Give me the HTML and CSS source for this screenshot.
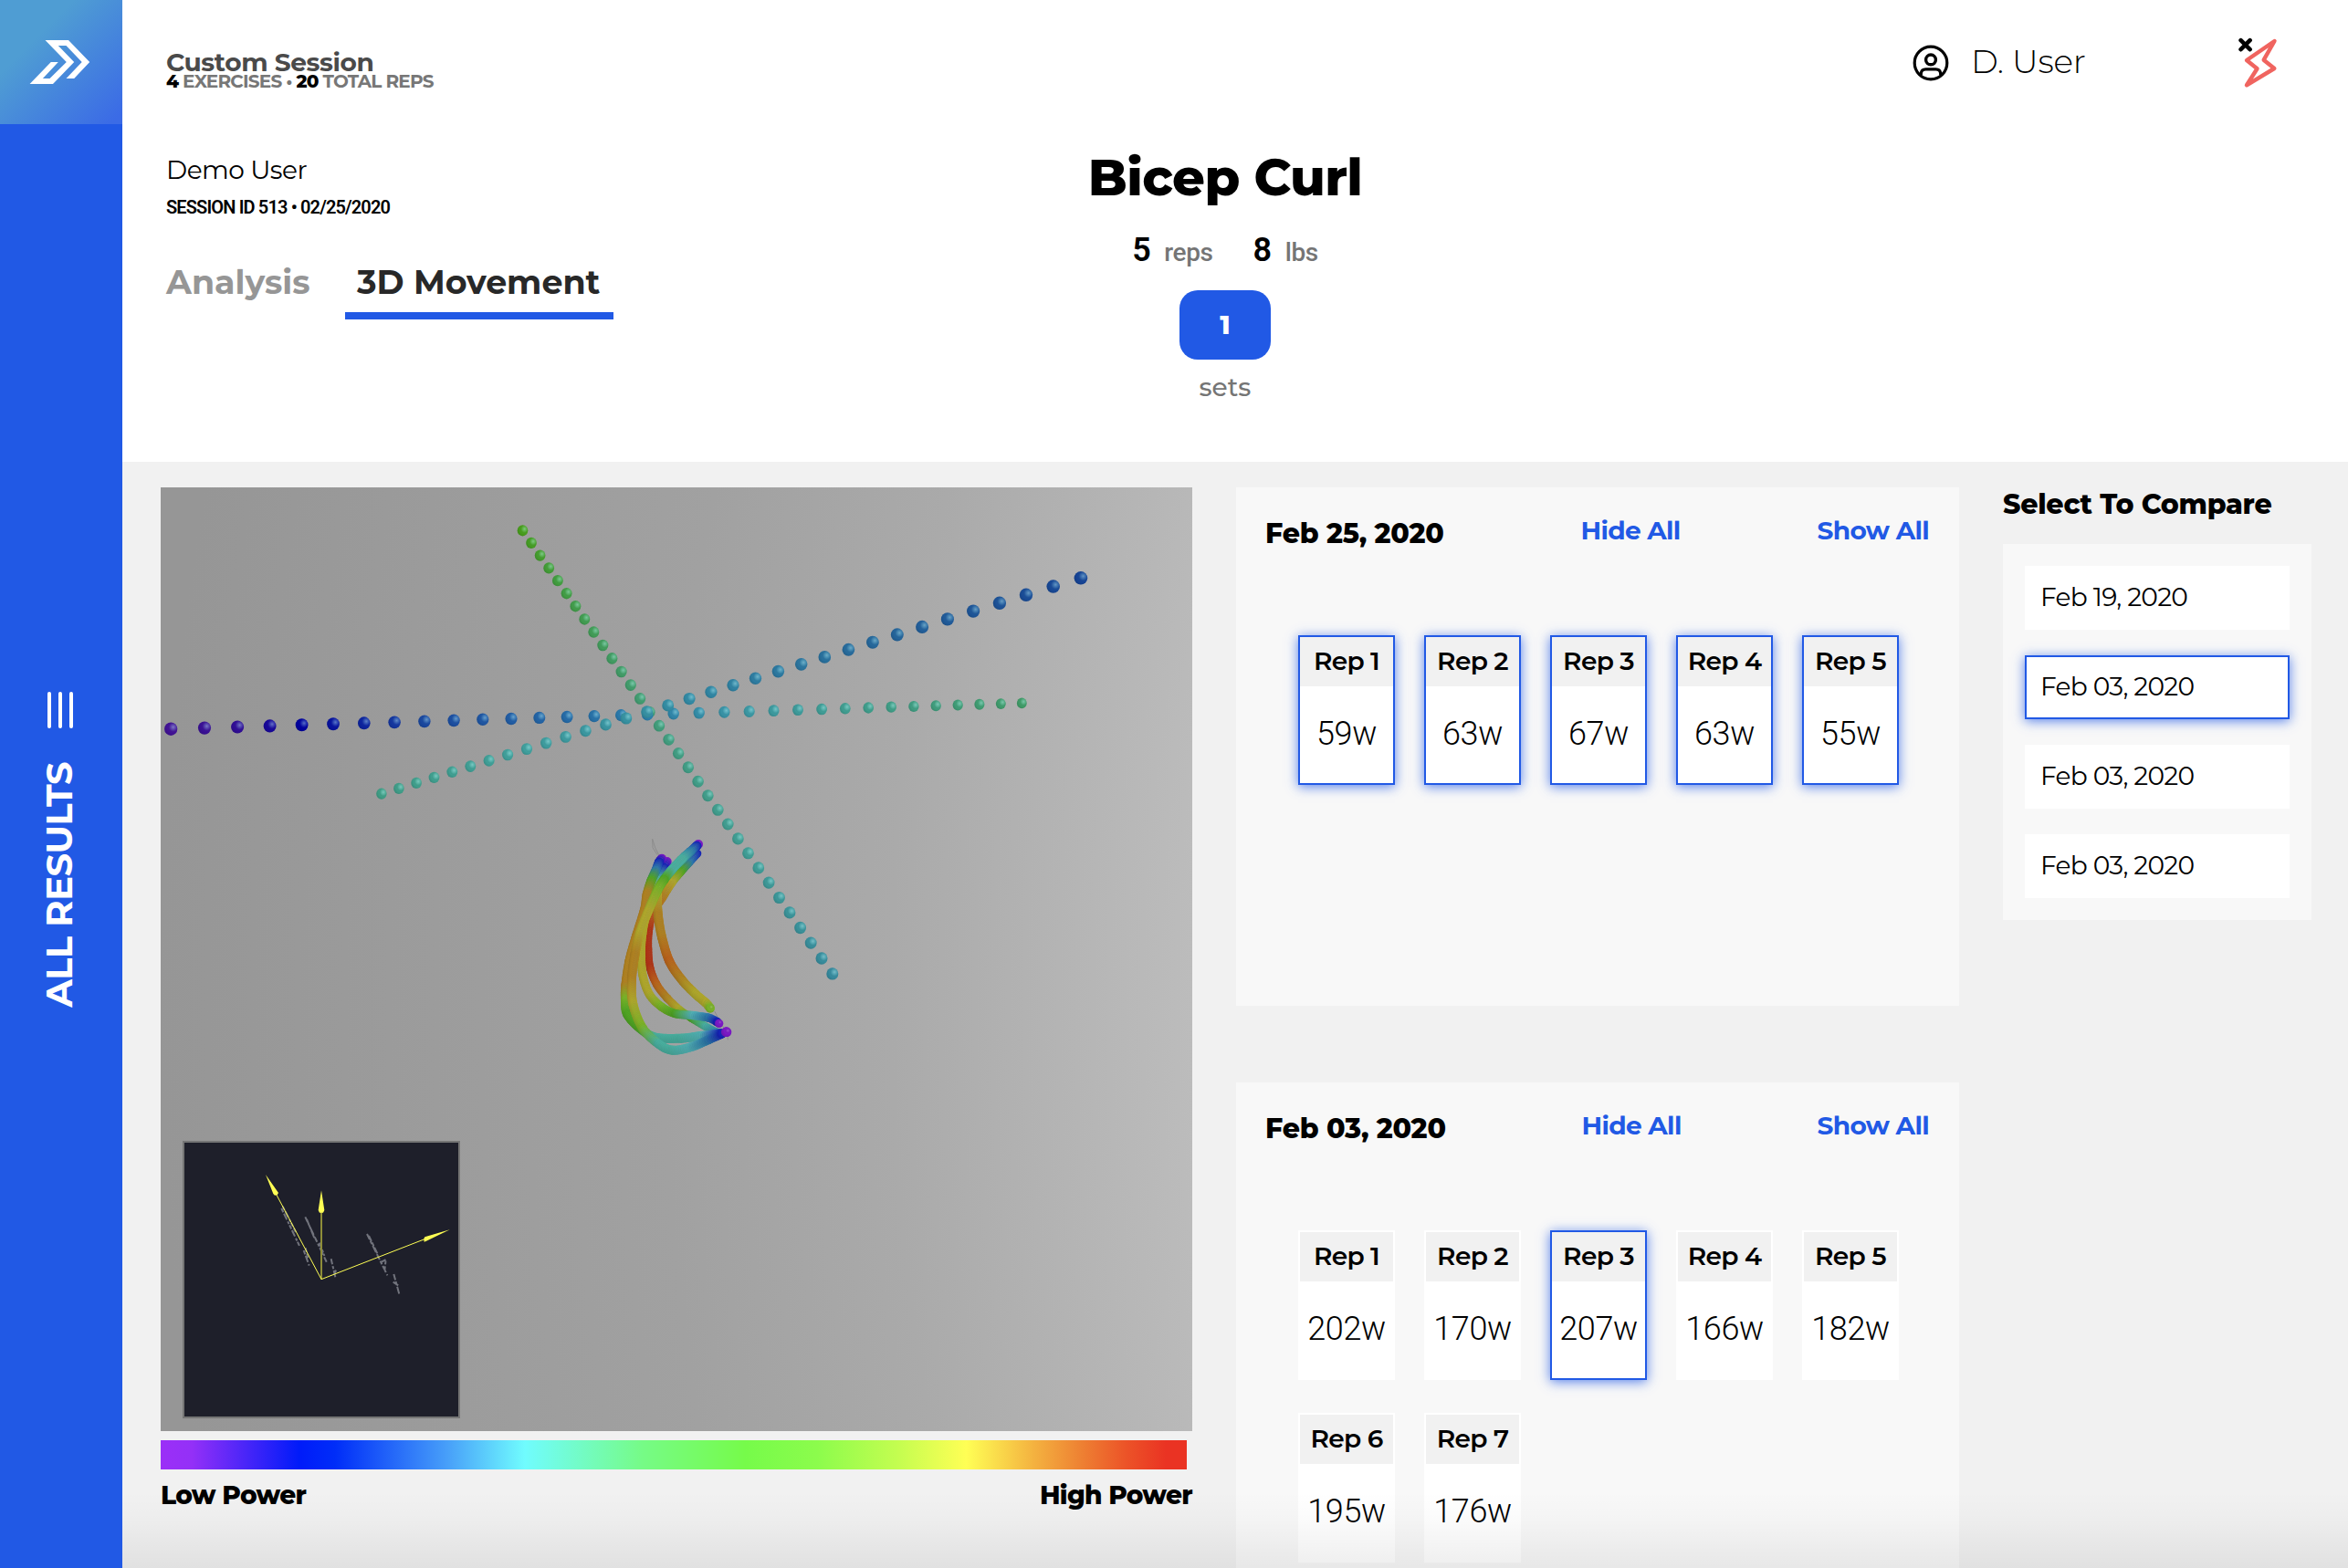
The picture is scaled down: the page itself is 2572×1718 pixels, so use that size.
FILE: index.html
```html
<!DOCTYPE html>
<html lang="en">
<head>
<meta charset="utf-8">
<title>Bicep Curl - 3D Movement</title>
<link rel="stylesheet" href="styles.css">
</head>
<body>
<div class="app">
  <aside class="sidebar">
    <div class="logo">
      <svg width="134" height="136" viewBox="0 0 134 136"><path fill="#fff" d="M49.5 44H75L98.2 68 81.2 86H72.5L89.7 68 72.5 50H63.8L81.2 68 58 92H32.6L55.8 68H63.8L46.9 86H54.5L72.8 68Z"/></svg>
    </div>
    <div class="all-results">
      <div class="bars"><i></i><i></i><i></i></div>
      <span class="all-label">ALL RESULTS</span>
    </div>
  </aside>
  <main class="main">
    <header class="header">
      <div class="session">
        <div class="session-name">Custom Session</div>
        <div class="session-meta"><b>4</b> EXERCISES • <b>20</b> TOTAL REPS</div>
        <div class="user-name">Demo User</div>
        <div class="session-id">SESSION ID 513 • 02/25/2020</div>
        <nav class="tabs">
          <a class="tab">Analysis</a>
          <a class="tab active">3D Movement</a>
        </nav>
      </div>
      <div class="exercise">
        <h1 class="exercise-name">Bicep Curl</h1>
        <div class="stats"><b>5</b><span>reps</span><b class="second">8</b><span>lbs</span></div>
        <button class="set">1</button>
        <div class="sets-label">sets</div>
      </div>
      <div class="account">
        <svg class="avatar" width="40" height="40" viewBox="0 0 40 40" fill="none" stroke="#000"><circle cx="20" cy="20" r="17.8" stroke-width="3.2"/><circle cx="20" cy="16.4" r="5.4" stroke-width="3.4"/><path stroke-width="3.2" d="M9.3 33V31.5Q9.7 26.8 14.5 26.8H25.5Q30.3 26.8 30.7 31.5V33"/></svg>
        <span class="account-name">D. User</span>
        <svg class="bolt" width="44" height="56" viewBox="2452 41 44 56" fill="none" stroke-linecap="round" stroke-linejoin="round"><path stroke="#f0645f" stroke-width="4.4" d="M2491.5 45 2461 66 2472.5 75.3 2461 93.3 2491.3 75 2479.7 65.7Z"/><path stroke="#000" stroke-width="4.6" d="M2454.6 44.2 2464.6 54.2M2464.6 44.2 2454.6 54.2"/></svg>
      </div>
    </header>
    <section class="content">
      <div class="viewer">
        <div class="stage">
          <svg id="scene" width="1130" height="1034" viewBox="176 534 1130 1034">
            <defs>
              <radialGradient id="shade" cx=".68" cy=".36" r=".72">
                <stop offset="0" stop-color="#cff" stop-opacity=".42"/>
                <stop offset=".35" stop-color="#bff" stop-opacity=".12"/>
                <stop offset=".6" stop-color="#000" stop-opacity="0"/>
                <stop offset="1" stop-color="#000" stop-opacity=".12"/>
              </radialGradient>
              <radialGradient id="tube" cx=".62" cy=".36" r=".7">
                <stop offset="0" stop-color="#fff" stop-opacity=".24"/>
                <stop offset=".5" stop-color="#000" stop-opacity="0"/>
                <stop offset="1" stop-color="#000" stop-opacity=".14"/>
              </radialGradient>
            </defs>
          </svg>
          <div class="axes">
            <svg width="300" height="300" viewBox="6 6 900 900" fill="none">
              <g stroke="#8d8f98" stroke-width="6" opacity=".75">
                <path stroke-dasharray="14 5 22 7 9 4" d="M325 222 384 345M329 215 372 300M398 360 416 410M404 352 412 385"/>
                <path stroke-dasharray="18 6 10 5 26 8" d="M403 250 474 400M408 258 436 326M450 335 466 378M488 388 502 448M504 425 498 442"/>
                <path stroke-dasharray="20 5 12 6 24 7" d="M606 306 673 442M612 312 640 370M650 400 668 390 664 425M694 438 712 504M692 464 710 476"/>
              </g>
              <path stroke="#8e8d38" stroke-width="6" d="M456 455V230"/>
              <path stroke="#ffff54" stroke-width="3" d="M308 176 456 455 798 322"/>
              <path fill="#ffff54" d="M456 163 466 228 462 236H450L446 228ZM273 111 315 171 311 178 303 179 298 174ZM878 292 801 329 794 332 793 322 796 316Z"/>
            </svg>
          </div>
        </div>
        <div class="scale"></div>
        <div class="scale-labels"><span>Low Power</span><span>High Power</span></div>
      </div>
      <div class="panels">
        <section class="panel">
          <div class="panel-head"><h2>Feb 25, 2020</h2><a>Hide All</a><a>Show All</a></div>
          <div class="reps">
            <div class="rep on"><h3>Rep 1</h3><p>59w</p></div>
            <div class="rep on"><h3>Rep 2</h3><p>63w</p></div>
            <div class="rep on"><h3>Rep 3</h3><p>67w</p></div>
            <div class="rep on"><h3>Rep 4</h3><p>63w</p></div>
            <div class="rep on"><h3>Rep 5</h3><p>55w</p></div>
          </div>
        </section>
        <section class="panel">
          <div class="panel-head"><h2>Feb 03, 2020</h2><a>Hide All</a><a>Show All</a></div>
          <div class="reps">
            <div class="rep"><h3>Rep 1</h3><p>202w</p></div>
            <div class="rep"><h3>Rep 2</h3><p>170w</p></div>
            <div class="rep on"><h3>Rep 3</h3><p>207w</p></div>
            <div class="rep"><h3>Rep 4</h3><p>166w</p></div>
            <div class="rep"><h3>Rep 5</h3><p>182w</p></div>
            <div class="rep"><h3>Rep 6</h3><p>195w</p></div>
            <div class="rep"><h3>Rep 7</h3><p>176w</p></div>
          </div>
        </section>
      </div>
      <aside class="compare">
        <h2>Select To Compare</h2>
        <div class="compare-list">
          <div class="date">Feb 19, 2020</div>
          <div class="date on">Feb 03, 2020</div>
          <div class="date">Feb 03, 2020</div>
          <div class="date">Feb 03, 2020</div>
        </div>
      </aside>
    </section>
  </main>
  <div class="fade"></div>
</div>
<script src="scene.js"></script>
</body>
</html>
```
FILE: styles.css
```css
* { box-sizing: border-box; }
body { margin: 0; background: #fff; color: #000; font-family: Montserrat, Inter, "Open Sans", sans-serif; }
h1, h2, h3, p { margin: 0; font-weight: inherit; }
.app { display: flex; width: 2572px; height: 1718px; overflow: hidden; position: relative; }

.sidebar { width: 134px; flex: none; display: flex; flex-direction: column; background: #2159e5; }
.logo { height: 136px; background: linear-gradient(135deg, #4f9dd3 30%, #3b6be6 95%); }
.logo svg { display: block; }
.all-results { flex: 1; display: flex; flex-direction: column; align-items: center; justify-content: center; gap: 37px; padding: 8px 3px 0 0; color: #fff; }
.bars { display: flex; gap: 8px; }
.bars i { width: 4px; height: 40px; border-radius: 2px; background: #fff; }
.all-label { writing-mode: vertical-rl; transform: rotate(180deg); margin-right: 2px; font-size: 40px; line-height: 46px; font-weight: 700; letter-spacing: -.55px; white-space: nowrap; }

.main { flex: 1; display: flex; flex-direction: column; background: #f1f1f1; }
.header { height: 506px; flex: none; display: grid; grid-template-columns: 1fr auto 1fr; padding: 0 70px 0 48px; background: #fff; }
.session { padding-top: 56px; }
.session-name { font-size: 28px; line-height: 24px; font-weight: 700; letter-spacing: -.38px; color: #4a4a4a; }
.session-meta { font-size: 20px; line-height: 18px; font-weight: 700; letter-spacing: -.78px; color: #777; }
.session-meta b { font-weight: 800; color: #000; }
.user-name { margin-top: 72px; font-size: 28px; line-height: 32px; letter-spacing: -.5px; }
.session-id { margin-top: 13px; font: 600 20px/24px Roboto, sans-serif; letter-spacing: -.86px; }
.tabs { display: grid; grid-template-columns: 196px 294px; margin-top: 48px; }
.tab { padding-bottom: 11px; font-size: 36.4px; line-height: 44px; font-weight: 700; color: #969696; border-bottom: 8px solid transparent; white-space: nowrap; }
.tab.active { padding-left: 13px; color: #282828; border-color: #2159e5; }

.exercise { display: flex; flex-direction: column; align-items: center; padding-top: 162px; }
.exercise-name { font-size: 56px; line-height: 64px; font-weight: 800; letter-spacing: -.6px; white-space: nowrap; }
.stats { display: flex; align-items: baseline; gap: 15px; margin-top: 26px; font: 500 28px/44px Roboto, sans-serif; letter-spacing: -.4px; color: #757575; }
.stats b { font-size: 36px; font-weight: 600; color: #000; }
.stats .second { margin-left: 29px; }
.set { width: 100px; height: 76px; margin-top: 19px; padding: 0; border: 0; border-radius: 20px; background: #2159e5; color: #fff; font: 800 28px/76px Montserrat, Inter, sans-serif; }
.sets-label { margin-top: 14px; font-size: 28px; line-height: 32px; font-weight: 500; color: #757575; }

.account { display: flex; justify-content: flex-end; align-items: flex-start; padding: 41px 6px 0 0; }
.avatar { margin-top: 8px; }
.account-name { width: 121px; margin: 4px 172px 0 24px; font-size: 36px; line-height: 44px; font-weight: 300; letter-spacing: -.15px; white-space: nowrap; }

.content { flex: 1; display: flex; gap: 48px; padding: 28px 40px 0 42px; min-height: 0; }
.viewer { width: 1130px; }
.stage { position: relative; height: 1034px; background: radial-gradient(circle at 3300px 560px, #bcbcbc 2170px, #aaaaaa 2500px, #a1a1a1 2750px, #969696 3300px); }
.stage > svg { display: block; }
.axes { position: absolute; left: 24px; top: 716px; width: 304px; height: 304px; border: 2px solid #757575; background: #1e1f2a; }
.axes svg { display: block; }
.scale { width: 1124px; height: 32px; margin-top: 10px; background: linear-gradient(90deg, #9b2ff7, #9430f7 3%, #001bf9 13.5%, #002df8 17%, #48a0f9 28%, #70fcfe 35.5%, #76fb86 47%, #76fb4a 57%, #8cfc4c 64%, #c5fd50 72%, #ffff55 78.5%, #f4b340 85%, #ee8333 89.5%, #ec5428 94%, #ea3323 98%); }
.scale-labels { display: flex; justify-content: space-between; margin-top: 12px; font-size: 28px; line-height: 32px; font-weight: 800; letter-spacing: -.7px; }

.panels { width: 792px; display: flex; flex-direction: column; gap: 84px; }
.panel { height: 568px; flex: none; background: #f8f8f8; }
.panel-head { display: flex; justify-content: space-between; height: 162px; padding: 29px 33px 0 32px; font-size: 28px; line-height: 36px; font-weight: 700; letter-spacing: -.65px; color: #2159e5; }
.panel-head h2 { margin-top: 4px; font-size: 30px; font-weight: 800; letter-spacing: -.2px; color: #000; }
.reps { display: flex; flex-wrap: wrap; gap: 36px 32px; padding: 0 40px 0 68px; }
.rep { width: 106px; height: 164px; border: 2px solid #fff; background: #fff; text-align: center; }
.rep h3 { height: 54px; background: #f1f1f1; font-size: 28px; line-height: 52px; font-weight: 600; letter-spacing: -.65px; }
.rep p { font: 300 36px/104px Roboto, sans-serif; letter-spacing: -.4px; }
.on { border-color: #2159e5 !important; box-shadow: 0 2px 12px rgba(33, 89, 229, .75); }

.compare { width: 338px; }
.compare h2 { height: 62px; padding-top: 1px; font-size: 30px; line-height: 36px; font-weight: 800; letter-spacing: -.23px; white-space: nowrap; }
.compare-list { display: flex; flex-direction: column; gap: 28px; padding: 24px; background: #f8f8f8; }
.date { height: 70px; padding-left: 15px; border: 2px solid #fff; background: #fff; font-size: 28px; line-height: 65px; letter-spacing: -.68px; }

.fade { position: absolute; left: 134px; right: 0; bottom: 0; height: 84px; background: linear-gradient(transparent, rgba(0, 0, 0, .015) 35%, rgba(0, 0, 0, .065)); }
```
FILE: scene.js
```js
const NS = 'http://www.w3.org/2000/svg';
const scene = document.getElementById('scene');

function ellipse(parent, x, y, rx, ry, fill) {
  const e = document.createElementNS(NS, 'ellipse');
  e.setAttribute('cx', x.toFixed(1));
  e.setAttribute('cy', y.toFixed(1));
  e.setAttribute('rx', rx.toFixed(2));
  e.setAttribute('ry', ry.toFixed(2));
  e.setAttribute('fill', fill);
  parent.appendChild(e);
}

const mix = (a, b, t) => a + (b - a) * t;

// stops: [[position 0..1, [r, g, b]], ...]
function colorAt(stops, t) {
  let i = 1;
  while (i < stops.length - 1 && t > stops[i][0]) i++;
  const [p0, c0] = stops[i - 1];
  const [p1, c1] = stops[i];
  const u = Math.min(1, Math.max(0, (t - p0) / (p1 - p0)));
  return `rgb(${c0.map((v, k) => Math.round(mix(v, c1[k], u))).join(',')})`;
}

// Axis of 33 beads; k is the perspective ratio between both ends.
function beads(x0, y0, x1, y1, k, ra, rb, stops) {
  for (let i = 0; i <= 32; i++) {
    const t = i / 32;
    const f = t / (t + k * (1 - t));
    const x = mix(x0, x1, f), y = mix(y0, y1, f);
    const rx = mix(ra[0], rb[0], t), ry = mix(ra[1], rb[1], t);
    ellipse(scene, x, y, rx, ry, colorAt(stops, t));
    ellipse(scene, x, y, rx, ry, 'url(#shade)');
  }
}

beads(572.5, 581.3, 911.8, 1066.9, 1.1205, [5.8, 6.1], [6.5, 6.7],
  [[0, [72, 158, 28]], [.12, [66, 158, 62]], [.3, [66, 156, 96]], [.5, [66, 158, 128]], [.75, [64, 158, 150]], [1, [54, 138, 158]]]);
beads(187.2, 798.7, 1119.3, 770.4, .7857, [7.1, 7.2], [5.4, 5.9],
  [[0, [66, 18, 150]], [.06, [50, 14, 150]], [.125, [0, 0, 158]], [.25, [26, 72, 160]], [.5, [44, 128, 172]], [.62, [60, 152, 165]], [.75, [64, 158, 145]], [1, [64, 156, 104]]]);
beads(417.9, 869.7, 1183.9, 633.3, 1.2716, [5.7, 6.1], [7.3, 7.3],
  [[0, [64, 158, 134]], [.25, [64, 160, 158]], [.5, [50, 138, 165]], [.75, [38, 104, 156]], [1, [22, 68, 150]]]);

const P = [124, 24, 200], B = [22, 34, 185], L = [44, 120, 172], T = [74, 176, 160], G = [80, 166, 36],
  Y = [176, 168, 44], O = [176, 130, 34], D = [186, 98, 28], R = [176, 52, 22], C = [84, 180, 184], E = [122, 180, 40];

const g = document.createElementNS(NS, 'g');
g.setAttribute('transform', 'translate(640 880) scale(.33333)');
scene.appendChild(g);

function line(d) {
  const p = document.createElementNS(NS, 'path');
  p.setAttribute('d', d);
  p.setAttribute('fill', 'none');
  p.setAttribute('stroke', '#8c8c8c');
  p.setAttribute('stroke-width', '3');
  g.appendChild(p);
}
line('M224 118Q232 150 246 172M224 118L225 146 240 170M428 684 470 760 472 778');

// Tube through [x, y, colour] knots.
function tube(r, knots) {
  const n = knots.length;
  const at = i => knots[Math.max(0, Math.min(n - 1, i))];
  for (let i = 0; i < n - 1; i++) {
    const [a, b, c, d] = [at(i - 1), at(i), at(i + 1), at(i + 2)];
    const steps = Math.max(1, Math.round(Math.hypot(c[0] - b[0], c[1] - b[1]) / 5));
    for (let s = 0; s <= steps; s++) {
      const t = s / steps;
      const q = k => .5 * (2 * b[k] + (c[k] - a[k]) * t + (2 * a[k] - 5 * b[k] + 4 * c[k] - d[k]) * t * t + (3 * b[k] - a[k] - 3 * c[k] + d[k]) * t * t * t);
      ellipse(g, q(0), q(1), r, r, colorAt([[0, b[2]], [1, c[2]]], t));
      ellipse(g, q(0), q(1), r, r, 'url(#tube)');
    }
  }
}

tube(13, [[372, 165, B], [345, 195, L], [318, 225, G], [288, 262, Y], [258, 310, O], [226, 360, D], [212, 420, R], [210, 480, R], [216, 540, R], [238, 596, D], [272, 640, O], [312, 678, Y], [352, 706, G], [400, 735, T], [442, 756, L], [450, 757, B]]);
tube(15, [[272, 192, P], [262, 212, B], [246, 255, T], [240, 300, Y], [243, 370, O], [255, 440, O], [280, 520, D], [320, 580, O], [365, 627, Y], [400, 657, Y], [414, 674, E]]);
tube(14, [[235, 290, E], [208, 350, Y], [191, 430, Y], [187, 500, Y], [193, 570, Y], [215, 630, Y], [255, 670, E], [300, 692, G], [360, 698, C], [410, 706, L], [438, 720, B], [443, 724, P]]);
tube(15, [[255, 182, P], [246, 194, B], [235, 222, L], [220, 255, G], [206, 300, O], [198, 350, O], [170, 440, O], [148, 520, O], [136, 600, O], [135, 650, E], [142, 695, G], [185, 742, G], [235, 770, T], [320, 773, T], [390, 764, C], [450, 757, B]]);
tube(15, [[375, 135, P], [370, 140, B], [350, 158, L], [320, 185, T], [285, 222, T], [262, 252, G], [240, 288, E], [208, 360, Y], [182, 430, Y], [166, 500, O], [156, 580, O], [160, 660, Y], [192, 740, E], [245, 792, T], [290, 812, T], [350, 802, C], [410, 777, L], [452, 758, B]]);
tube(16, [[466, 752, P], [468, 752, P]]);
```
